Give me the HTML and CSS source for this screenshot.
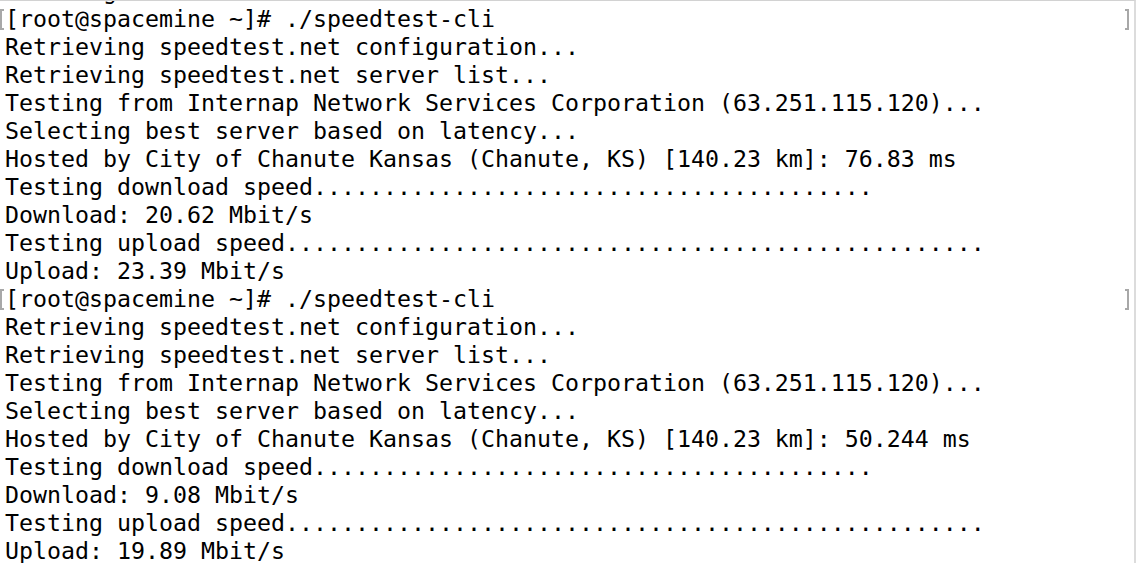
FILE: index.html
```html
<!DOCTYPE html>
<html>
<head>
<meta charset="utf-8">
<link rel="stylesheet" href="styles.css">
</head>
<body>
<div class="terminal">
  <div class="lines">
    <div class="line"><span class="gutter"></span><span class="text">Building</span></div>
    <div class="line prompt"><span class="gutter"><i class="lbr"></i></span><span class="text">[root@spacemine ~]# ./speedtest-cli</span><span class="mark"><i class="rbr"></i></span></div>
    <div class="line"><span class="gutter"></span><span class="text">Retrieving speedtest.net configuration...</span></div>
    <div class="line"><span class="gutter"></span><span class="text">Retrieving speedtest.net server list...</span></div>
    <div class="line"><span class="gutter"></span><span class="text">Testing from Internap Network Services Corporation (63.251.115.120)...</span></div>
    <div class="line"><span class="gutter"></span><span class="text">Selecting best server based on latency...</span></div>
    <div class="line"><span class="gutter"></span><span class="text">Hosted by City of Chanute Kansas (Chanute, KS) [140.23 km]: 76.83 ms</span></div>
    <div class="line"><span class="gutter"></span><span class="text">Testing download speed........................................</span></div>
    <div class="line"><span class="gutter"></span><span class="text">Download: 20.62 Mbit/s</span></div>
    <div class="line"><span class="gutter"></span><span class="text">Testing upload speed..................................................</span></div>
    <div class="line"><span class="gutter"></span><span class="text">Upload: 23.39 Mbit/s</span></div>
    <div class="line prompt"><span class="gutter"><i class="lbr"></i></span><span class="text">[root@spacemine ~]# ./speedtest-cli</span><span class="mark"><i class="rbr"></i></span></div>
    <div class="line"><span class="gutter"></span><span class="text">Retrieving speedtest.net configuration...</span></div>
    <div class="line"><span class="gutter"></span><span class="text">Retrieving speedtest.net server list...</span></div>
    <div class="line"><span class="gutter"></span><span class="text">Testing from Internap Network Services Corporation (63.251.115.120)...</span></div>
    <div class="line"><span class="gutter"></span><span class="text">Selecting best server based on latency...</span></div>
    <div class="line"><span class="gutter"></span><span class="text">Hosted by City of Chanute Kansas (Chanute, KS) [140.23 km]: 50.244 ms</span></div>
    <div class="line"><span class="gutter"></span><span class="text">Testing download speed........................................</span></div>
    <div class="line"><span class="gutter"></span><span class="text">Download: 9.08 Mbit/s</span></div>
    <div class="line"><span class="gutter"></span><span class="text">Testing upload speed..................................................</span></div>
    <div class="line"><span class="gutter"></span><span class="text">Upload: 19.89 Mbit/s</span></div>
  </div>
</div>
</body>
</html>
```
FILE: styles.css
```css
html, body {
  margin: 0;
  padding: 0;
  background: #ffffff;
  overflow: hidden;
}
.terminal {
  width: 1134px;
  height: 562px;
  border-top: 1px solid #d2d2d2;
  border-right: 2px solid #dcdcdc;
  overflow: hidden;
  background: #ffffff;
}
.lines {
  margin-top: -24px;
}
.line {
  display: flex;
  align-items: center;
  height: 28px;
  font-family: "DejaVu Sans Mono", "Liberation Mono", monospace;
  font-size: 23.25px;
  line-height: 28px;
  color: #000000;
  white-space: pre;
}
.gutter {
  width: 5px;
  flex: none;
  display: flex;
  align-items: center;
  height: 28px;
}
.text {
  flex: 1;
}
.mark {
  flex: none;
  width: 9px;
  display: flex;
  align-items: center;
  height: 28px;
}
.lbr {
  display: block;
  width: 2px;
  height: 17px;
  border: 2px solid #a8a8a8;
  border-right: none;
}
.rbr {
  display: block;
  width: 2px;
  height: 17px;
  border: 2px solid #a8a8a8;
  border-left: none;
}
```
